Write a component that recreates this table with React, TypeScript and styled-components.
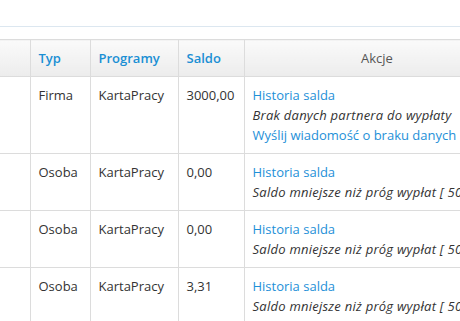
import React from "react";
import styled, {createGlobalStyle} from "styled-components";

type RowType = {
    id: number;
    typ: string;
    program: string;
    saldo: string;
    note: string;
    sendLink?: boolean;
};

const rows: RowType[] = [
    {id: 1, typ: "Firma", program: "KartaPracy", saldo: "3000,00", note: "Brak danych partnera do wypłaty", sendLink: true},
    {id: 2, typ: "Osoba", program: "KartaPracy", saldo: "0,00", note: "Saldo mniejsze niż próg wypłat [ 50,00 ]"},
    {id: 3, typ: "Osoba", program: "KartaPracy", saldo: "0,00", note: "Saldo mniejsze niż próg wypłat [ 50,00 ]"},
    {id: 4, typ: "Osoba", program: "KartaPracy", saldo: "3,31", note: "Saldo mniejsze niż próg wypłat [ 50,00 ]"},
];

const GlobalStyle = createGlobalStyle`
    html, body {
        margin: 0;
        padding: 0;
        background: #ffffff;
        overflow: hidden;
    }
    body {
        font-family: "Open Sans", "Liberation Sans", sans-serif;
        font-size: 13px;
        color: #333333;
    }
`;

const Page = styled.div`
    width: 460px;
    height: 321px;
    overflow: hidden;
`;

const PanelTop = styled.div`
    height: 26px;
    border-bottom: 1px solid #dce7f0;
    margin-bottom: 12px;
`;

const Table = styled.table`
    border-collapse: collapse;
    table-layout: fixed;
    width: 510px;
`;

const HeadCell = styled.th<{ $w: number; $center?: boolean; $first?: boolean }>`
    width: ${p => p.$w}px;
    box-sizing: border-box;
    padding: 8px;
    line-height: 20px;
    text-align: ${p => (p.$center ? "center" : "left")};
    font-weight: ${p => (p.$center ? 400 : 600)};
    color: ${p => (p.$center ? "#555555" : "#1a8fd4")};
    background: linear-gradient(to bottom, #fafafa, #ececec);
    border: 1px solid #dcdcdc;
    border-left: ${p => (p.$first ? "none" : "1px solid #dcdcdc")};
    white-space: nowrap;
`;

const Cell = styled.td<{ $first?: boolean }>`
    box-sizing: border-box;
    padding: 8px;
    line-height: 20px;
    vertical-align: top;
    border: 1px solid #dcdcdc;
    border-left: ${p => (p.$first ? "none" : "1px solid #dcdcdc")};
    border-top: none;
    white-space: nowrap;
    overflow: hidden;
`;

const Link = styled.a`
    display: block;
    color: #1e90d8;
    text-decoration: none;
    cursor: pointer;
`;

const Note = styled.div`
    font-style: italic;
    letter-spacing: 0.25px;
    color: #333333;
`;

export default function App() {
    return (
        <Page>
            <GlobalStyle/>
            <PanelTop/>
            <Table>
                <thead>
                <tr>
                    <HeadCell $w={30} $first/>
                    <HeadCell $w={60}>Typ</HeadCell>
                    <HeadCell $w={88}>Programy</HeadCell>
                    <HeadCell $w={66}>Saldo</HeadCell>
                    <HeadCell $w={266} $center>Akcje</HeadCell>
                </tr>
                </thead>
                <tbody>
                {rows.map(r => (
                    <tr key={r.id}>
                        <Cell $first/>
                        <Cell>{r.typ}</Cell>
                        <Cell>{r.program}</Cell>
                        <Cell>{r.saldo}</Cell>
                        <Cell>
                            <Link>Historia salda</Link>
                            <Note>{r.note}</Note>
                            {r.sendLink && <Link>Wyślij wiadomość o braku danych</Link>}
                        </Cell>
                    </tr>
                ))}
                </tbody>
            </Table>
        </Page>
    );
}
